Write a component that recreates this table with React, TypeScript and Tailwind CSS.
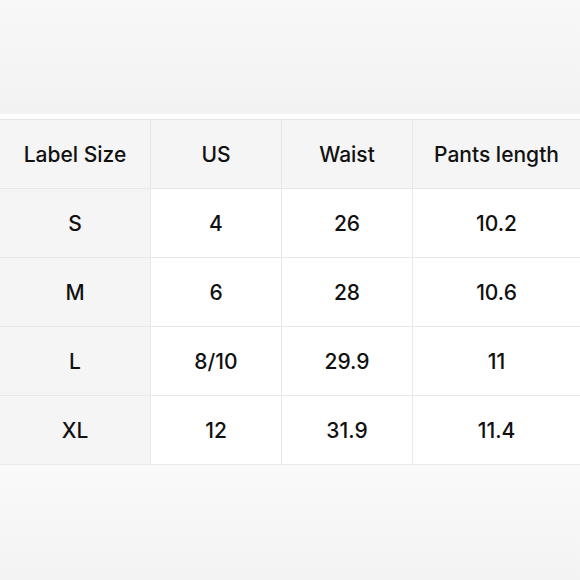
import React from 'react';

const headers = ['Label Size', 'US', 'Waist', 'Pants length'];

const rows = [
  ['S', '4', '26', '10.2'],
  ['M', '6', '28', '10.6'],
  ['L', '8/10', '29.9', '11'],
  ['XL', '12', '31.9', '11.4'],
];

export default function App() {
  return (
    <div
      className="w-[580px] h-[580px] flex flex-col bg-[#f4f4f4] text-[#111111]"
      style={{ fontFamily: 'Inter, "Noto Sans", sans-serif' }}
    >
      {/* top band */}
      <div className="h-[114px] bg-gradient-to-b from-[#f8f8f8] to-[#f2f2f2]" />
      <div className="h-[5px] bg-white" />

      {/* table */}
      <div className="grid grid-cols-[151px_131px_131px_1fr] border-t border-[#e4e4e4] bg-white">
        {headers.map((h, i) => (
          <div
            key={h}
            className={`h-[69px] pt-[2px] flex items-center justify-center bg-[#f5f5f5] border-b border-[#e8e8e8] text-[21px] font-[550] ${i < 3 ? 'border-r' : ''}`}
          >
            {h}
          </div>
        ))}
        {rows.map((r) =>
          r.map((c, i) => (
            <div
              key={r[0] + i}
              className={`h-[69px] pt-[2px] flex items-center justify-center border-b border-[#e8e8e8] text-[21px] font-[550] ${i === 0 ? 'bg-[#f5f5f5]' : 'bg-white'} ${i < 3 ? 'border-r' : ''}`}
            >
              {c}
            </div>
          ))
        )}
      </div>

      {/* bottom band */}
      <div className="flex-1 bg-gradient-to-b from-[#fafafa] to-[#f3f3f3]" />
    </div>
  );
}
